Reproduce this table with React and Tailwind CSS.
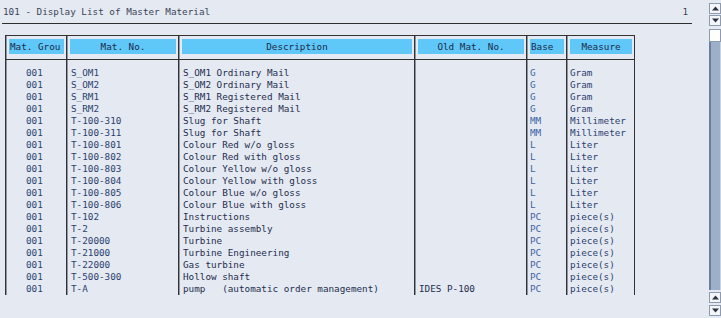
import React from 'react';

const rows = [
  ['001', 'S_OM1', 'S_OM1 Ordinary Mail', '', 'G', 'Gram'],
  ['001', 'S_OM2', 'S_OM2 Ordinary Mail', '', 'G', 'Gram'],
  ['001', 'S_RM1', 'S_RM1 Registered Mail', '', 'G', 'Gram'],
  ['001', 'S_RM2', 'S_RM2 Registered Mail', '', 'G', 'Gram'],
  ['001', 'T-100-310', 'Slug for Shaft', '', 'MM', 'Millimeter'],
  ['001', 'T-100-311', 'Slug for Shaft', '', 'MM', 'Millimeter'],
  ['001', 'T-100-801', 'Colour Red w/o gloss', '', 'L', 'Liter'],
  ['001', 'T-100-802', 'Colour Red with gloss', '', 'L', 'Liter'],
  ['001', 'T-100-803', 'Colour Yellow w/o gloss', '', 'L', 'Liter'],
  ['001', 'T-100-804', 'Colour Yellow with gloss', '', 'L', 'Liter'],
  ['001', 'T-100-805', 'Colour Blue w/o gloss', '', 'L', 'Liter'],
  ['001', 'T-100-806', 'Colour Blue with gloss', '', 'L', 'Liter'],
  ['001', 'T-102', 'Instructions', '', 'PC', 'piece(s)'],
  ['001', 'T-2', 'Turbine assembly', '', 'PC', 'piece(s)'],
  ['001', 'T-20000', 'Turbine', '', 'PC', 'piece(s)'],
  ['001', 'T-21000', 'Turbine Engineering', '', 'PC', 'piece(s)'],
  ['001', 'T-22000', 'Gas turbine', '', 'PC', 'piece(s)'],
  ['001', 'T-500-300', 'Hollow shaft', '', 'PC', 'piece(s)'],
  ['001', 'T-A', 'pump   (automatic order management)', 'IDES P-100', 'PC', 'piece(s)'],
];

// one entry per column: width, header, header alignment, cell padding, text colour
const columns = [
  { w: 'w-[61px]', title: 'Mat. Grou', head: 'justify-start', pad: 'pl-[20px]', color: 'text-[#2a4676]' },
  { w: 'w-[112px]', title: 'Mat. No.', head: 'justify-center', pad: 'pl-[4px]', color: 'text-[#2a4270]' },
  { w: 'w-[236px]', title: 'Description', head: 'justify-center', pad: 'pl-[4px]', color: 'text-[#1e2e50]' },
  { w: 'w-[112px]', title: 'Old Mat. No.', head: 'justify-center', pad: 'pl-[4px]', color: 'text-[#1e2e50]' },
  { w: 'w-[40px]', title: 'Base', head: 'justify-start', pad: 'pl-[3px]', color: 'text-[#3c64a6]' },
  { w: 'w-[68px]', title: 'Measure', head: 'justify-center', pad: 'pl-[3px]', color: 'text-[#2a4270]' },
];

const ArrowBtn = ({ up }) => (
  <div className="w-[12px] h-[11px] bg-[#f3f5f9] border border-[#8d9bb0] flex items-center justify-center">
    <svg width="7" height="5" viewBox="0 0 7 5">
      {up ? <path d="M0 4.5 L3.5 0.5 L7 4.5 Z" fill="#2a3244" /> : <path d="M0 0.5 L3.5 4.5 L7 0.5 Z" fill="#2a3244" />}
    </svg>
  </div>
);

const App = () => {
  return (
    <div
      className="w-[721px] h-[318px] bg-[#e5e9f1] flex overflow-hidden text-[9.3px] leading-[12px] antialiased"
      style={{ fontFamily: '"DejaVu Sans Mono", "Liberation Mono", monospace' }}
    >
      {/* List area */}
      <div className="flex-1 flex flex-col">
        <div className="h-[23px] flex items-center justify-between pl-[3px] pr-[20px] pt-[1px] text-[#3a4458]">
          <span>101 - Display List of Master Material</span>
          <span>1</span>
        </div>
        <div className="ml-[2px] mr-[16px] h-px bg-[#2e2e2e]" />

        <div className="mt-[11px] ml-[5px] flex border-t border-r border-[#333] self-start">
          {columns.map((col, ci) => (
            <div key={ci} className={`${col.w} flex flex-col border-l border-[#333] shadow-[inset_1px_0_0_#8e96a4]`}>
              <div className="h-[24px] border-b border-[#333] pt-[3px] pl-[3px] pr-[2px]">
                <div className={`h-[15px] bg-[#5fc8f8] flex items-center px-[1px] text-[#1c2a4a] ${col.head}`}>
                  {col.title}
                </div>
              </div>
              <div className="pt-[7px]">
                {rows.map((r, ri) => (
                  <div key={ri} className={`h-[12px] whitespace-pre ${col.pad} ${col.color}`}>
                    {r[ci]}
                  </div>
                ))}
              </div>
            </div>
          ))}
        </div>
      </div>

      {/* Scrollbar */}
      <div className="w-[13px] flex flex-col pt-[3px] pb-[2px] pl-[1px]">
        <ArrowBtn up />
        <div className="mt-[1px]">
          <ArrowBtn />
        </div>
        <div className="mt-[3px] flex-1 flex flex-col">
          <div className="h-[13px] bg-white border border-[#8d9bb0]" />
          <div className="flex-1 bg-[#9cb1c9] border-l-2 border-[#6b7f9c] border-r border-r-[#c8d4e2]" />
        </div>
        <div className="mt-[2px]">
          <ArrowBtn up />
        </div>
        <div className="mt-[2px]">
          <ArrowBtn />
        </div>
      </div>
    </div>
  );
};

export default App;
